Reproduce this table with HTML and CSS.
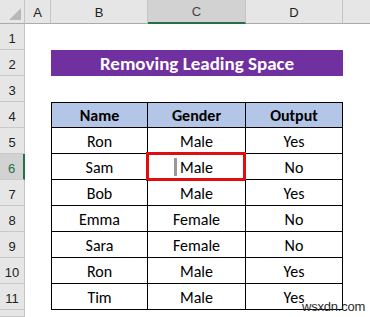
FILE: index.html
```html
<!DOCTYPE html>
<html>
<head>
<meta charset="utf-8">
<link rel="stylesheet" href="styles.css">
</head>
<body>
<div class="sheet">
  <div class="corner"><span class="tri"></span></div>
  <div class="ch">A</div>
  <div class="ch">B</div>
  <div class="ch sel">C</div>
  <div class="ch">D</div>
  <div class="ch last"></div>

  <div class="rh r1">1</div>
  <div class="rh r2">2</div>
  <div class="rh r3">3</div>
  <div class="rh r4">4</div>
  <div class="rh r5">5</div>
  <div class="rh r6 rsel">6</div>
  <div class="rh r7">7</div>
  <div class="rh r8">8</div>
  <div class="rh r9">9</div>
  <div class="rh r10">10</div>
  <div class="rh r11">11</div>
  <div class="rh r12"></div>

  <div class="title">Removing Leading Space</div>

  <div class="tbl">
    <div class="c h first">Name</div><div class="c h">Gender</div><div class="c h">Output</div>
    <div class="c first">Ron</div><div class="c">Male</div><div class="c">Yes</div>
    <div class="c first">Sam</div><div class="c active"><span class="caret"></span>Male<span class="selbox"></span></div><div class="c">No</div>
    <div class="c first">Bob</div><div class="c">Male</div><div class="c">Yes</div>
    <div class="c first">Emma</div><div class="c">Female</div><div class="c">No</div>
    <div class="c first">Sara</div><div class="c">Female</div><div class="c">No</div>
    <div class="c first">Ron</div><div class="c">Male</div><div class="c">Yes</div>
    <div class="c first">Tim</div><div class="c">Male</div><div class="c">Yes</div>
  </div>
  <div class="wm">wsxdn.com</div>
</div>
</body>
</html>
```
FILE: styles.css
```css
* { box-sizing: border-box; }
html, body { margin: 0; padding: 0; background: #fff; }
body { font-family: "Carlito", "Lato", "Open Sans", sans-serif; color: #000; }

.sheet {
  position: relative;
  width: 370px;
  height: 317px;
  overflow: hidden;
  display: grid;
  grid-template-columns: 25px 26px 97px 98px 97px 27px;
  grid-template-rows: 24px repeat(11, 26px) 7px;
}

.corner {
  grid-column: 1; grid-row: 1;
  background: #e6e6e6;
  border-right: 1px solid #c4c4c4;
  border-bottom: 1px solid #ababab;
  position: relative;
}
.tri {
  position: absolute; right: 3px; bottom: 3px;
  width: 0; height: 0;
  border-left: 12px solid transparent;
  border-bottom: 12px solid #b8b8b8;
}

.ch {
  grid-row: 1;
  background: #e6e6e6;
  border-right: 1px solid #c4c4c4;
  border-bottom: 1px solid #ababab;
  display: flex; align-items: center; justify-content: center;
  font-family: "Liberation Sans", Arial, sans-serif;
  font-size: 13px;
  color: #222;
  padding-top: 1px;
}
.ch.sel {
  background: #d2d2d2;
  border-bottom: 2px solid #217346;
  color: #444;
}
.ch.last { border-right: none; }

.rh {
  grid-column: 1;
  background: #e6e6e6;
  border-right: 1px solid #c4c4c4;
  border-bottom: 1px solid #c9c9c9;
  display: flex; align-items: center; justify-content: center;
  font-family: "Liberation Sans", Arial, sans-serif;
  font-size: 13px;
  color: #222;
  padding-top: 3px;
}
.rh.rsel {
  background: #d2d2d2;
  border-right: 2px solid #217346;
  color: #217346;
}
.r1 { grid-row: 2; } .r2 { grid-row: 3; } .r3 { grid-row: 4; } .r4 { grid-row: 5; }
.r5 { grid-row: 6; } .r6 { grid-row: 7; } .r7 { grid-row: 8; } .r8 { grid-row: 9; }
.r9 { grid-row: 10; } .r10 { grid-row: 11; } .r11 { grid-row: 12; } .r12 { grid-row: 13; }

.title {
  grid-column: 3 / 6; grid-row: 3;
  background: #7030a0;
  color: #fff;
  font-weight: bold;
  font-size: 19px;
  display: flex; align-items: center; justify-content: center;
  padding-top: 1px;
}

.tbl {
  grid-column: 3 / 6; grid-row: 5 / 13;
  display: grid;
  grid-template-columns: 97px 98px 97px;
  grid-template-rows: repeat(8, 26px);
}
.c {
  position: relative;
  border-right: 1px solid #000;
  border-bottom: 1px solid #000;
  display: flex; align-items: center; justify-content: center;
  font-size: 16px;
  padding-top: 1px;
}
.c.first { border-left: 1px solid #000; }
.c.h {
  background: #b4c6e7;
  border-top: 1px solid #000;
  font-weight: bold;
}
.caret {
  display: inline-block;
  width: 3px; height: 18px;
  background: #9a9a9a;
  margin-left: -6px;
  margin-right: 3px;
}
.selbox {
  position: absolute;
  left: -2px; top: -2px; right: -1px; bottom: -2px;
  border: 3px solid #e00f0f;
}

.wm {
  position: absolute;
  left: 302px; top: 299px;
  font-family: "Liberation Sans", Arial, sans-serif;
  font-size: 13px;
  color: #2b2b2b;
  letter-spacing: -0.2px;
}
```
